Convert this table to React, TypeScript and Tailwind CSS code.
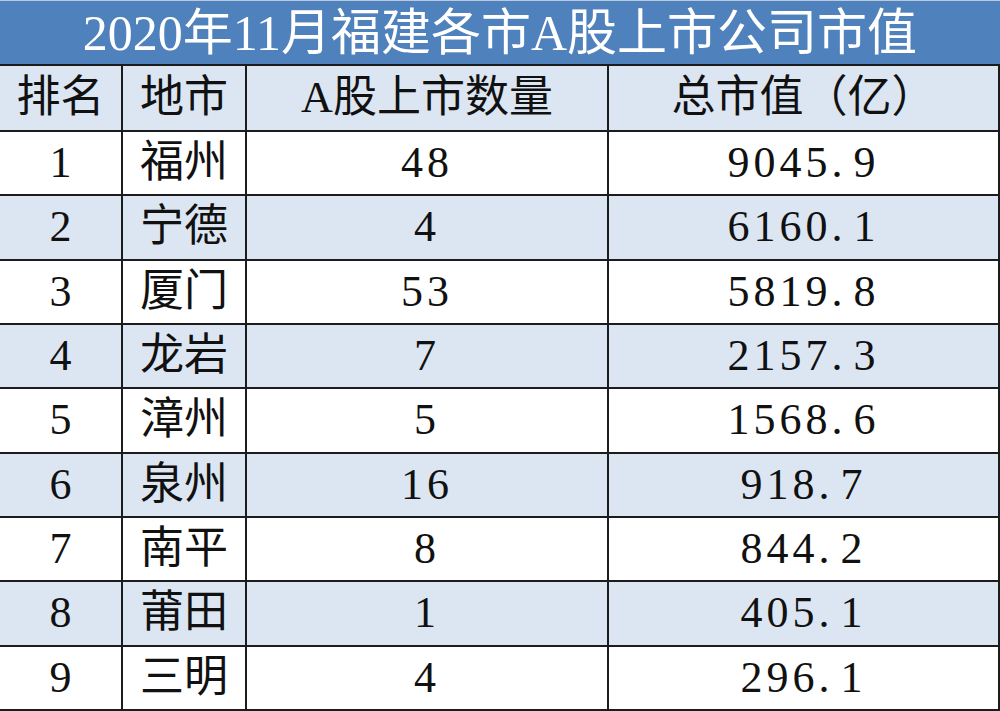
const rows = [
  ["1", "福州", "48", "9045.9"],
  ["2", "宁德", "4", "6160.1"],
  ["3", "厦门", "53", "5819.8"],
  ["4", "龙岩", "7", "2157.3"],
  ["5", "漳州", "5", "1568.6"],
  ["6", "泉州", "16", "918.7"],
  ["7", "南平", "8", "844.2"],
  ["8", "莆田", "1", "405.1"],
  ["9", "三明", "4", "296.1"],
];

// SimSun 风格的数字：字距略宽，小数点占半个字宽
function Num({ value }: { value: string }) {
  const [a, b] = value.split(".");
  return (
    <span className="tracking-[4px]">
      {a}
      <span className="inline-block w-[0.5em]">.</span>
      {b}
    </span>
  );
}

export default function App() {
  const cell =
    "flex items-center justify-center border-b-2 border-r-2 border-[#1c1c1c]";

  return (
    <div className="w-[1000px] h-[711px] flex flex-col bg-white text-[#111] [font-family:'Liberation_Serif','Noto_Sans_CJK_SC',serif]">
      <div className="h-[64px] shrink-0 flex items-center justify-center bg-[#4f81bd] border-t border-[#b9c9e0] text-white text-[50px] leading-none">
        2020年11月福建各市A股上市公司市值
      </div>

      <div className="flex-1 grid grid-cols-[123px_124px_362px_391px] grid-rows-[66px_repeat(9,1fr)] border-t-2 border-[#1c1c1c] text-[44px] leading-none">
        <div className={`${cell} bg-[#dce6f2]`}>排名</div>
        <div className={`${cell} bg-[#dce6f2]`}>地市</div>
        <div className={`${cell} bg-[#dce6f2]`}>A股上市数量</div>
        <div className={`${cell} bg-[#dce6f2]`}>总市值（亿）</div>

        {rows.map((r, i) => {
          const bg = i % 2 === 1 ? "bg-[#dce6f2]" : "bg-white";
          return [
            <div key={`${i}-a`} className={`${cell} ${bg}`}>{r[0]}</div>,
            <div key={`${i}-b`} className={`${cell} ${bg}`}>{r[1]}</div>,
            <div key={`${i}-c`} className={`${cell} ${bg} tracking-[4px]`}>{r[2]}</div>,
            <div key={`${i}-d`} className={`${cell} ${bg}`}>
              <Num value={r[3]} />
            </div>,
          ];
        })}
      </div>
    </div>
  );
}
